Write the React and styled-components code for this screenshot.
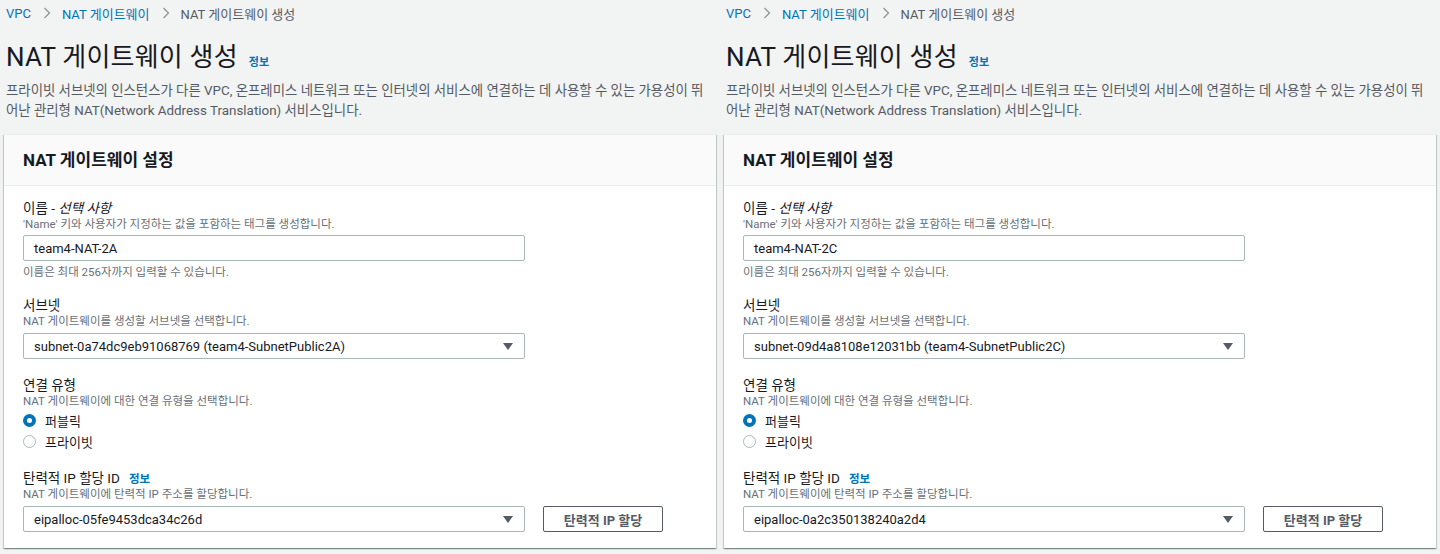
import React from "react";
import styled, { createGlobalStyle } from "styled-components";

const panels = [
  {
    name: "team4-NAT-2A",
    subnet: "subnet-0a74dc9eb91068769 (team4-SubnetPublic2A)",
    eip: "eipalloc-05fe9453dca34c26d"
  },
  {
    name: "team4-NAT-2C",
    subnet: "subnet-09d4a8108e12031bb (team4-SubnetPublic2C)",
    eip: "eipalloc-0a2c350138240a2d4"
  }
];

const ChevronIcon = () => (
  <Chevron viewBox="0 0 8 12" aria-hidden="true">
    <polyline points="1.5,1 6.5,6 1.5,11" fill="none" stroke="#879596" strokeWidth="1.2" />
  </Chevron>
);

const NatPanel = ({ data }) => (
  <Panel>
    <Breadcrumb>
      <Crumb link>VPC</Crumb>
      <ChevronIcon />
      <Crumb link>NAT 게이트웨이</Crumb>
      <ChevronIcon />
      <Crumb>NAT 게이트웨이 생성</Crumb>
    </Breadcrumb>

    <Title>
      NAT 게이트웨이 생성<InfoLink big>정보</InfoLink>
    </Title>
    <Description>
      <DescLine>
        프라이빗 서브넷의 인스턴스가 다른 VPC, 온프레미스 네트워크 또는 인터넷의 서비스에 연결하는 데 사용할 수 있는 가용성이 뛰
      </DescLine>
      <DescLine>어난 관리형 NAT(Network Address Translation) 서비스입니다.</DescLine>
    </Description>

    <Card>
      <CardHeader>NAT 게이트웨이 설정</CardHeader>
      <CardBody>
        <Field>
          <Label>
            이름 - <em>선택 사항</em>
          </Label>
          <Hint>'Name' 키와 사용자가 지정하는 값을 포함하는 태그를 생성합니다.</Hint>
          <Input>{data.name}</Input>
          <Hint after>이름은 최대 256자까지 입력할 수 있습니다.</Hint>
        </Field>

        <Field>
          <Label>서브넷</Label>
          <Hint>NAT 게이트웨이를 생성할 서브넷을 선택합니다.</Hint>
          <Select>
            {data.subnet}
            <Caret />
          </Select>
        </Field>

        <Field>
          <Label>연결 유형</Label>
          <Hint>NAT 게이트웨이에 대한 연결 유형을 선택합니다.</Hint>
          <RadioGroup>
            <RadioRow>
              <Radio checked />
              퍼블릭
            </RadioRow>
            <RadioRow>
              <Radio />
              프라이빗
            </RadioRow>
          </RadioGroup>
        </Field>

        <Field>
          <Label>
            탄력적 IP 할당 ID<InfoLink>정보</InfoLink>
          </Label>
          <Hint>NAT 게이트웨이에 탄력적 IP 주소를 할당합니다.</Hint>
          <ControlRow>
            <Select>
              {data.eip}
              <Caret />
            </Select>
            <Button>탄력적 IP 할당</Button>
          </ControlRow>
        </Field>
      </CardBody>
    </Card>
  </Panel>
);

export default function App() {
  return (
    <>
      <GlobalStyle />
      <Page>
        {panels.map((p, i) => (
          <NatPanel key={i} data={p} />
        ))}
      </Page>
    </>
  );
}

const GlobalStyle = createGlobalStyle`
  body {
    margin: 0;
    background: #f2f3f3;
    font-family: Roboto, "Noto Sans CJK KR", sans-serif;
    color: #16191f;
  }
`;

const Page = styled.div`
  display: flex;
  width: 1440px;
  height: 554px;
  overflow: hidden;
`;

const Panel = styled.div`
  width: 720px;
  flex-shrink: 0;
  padding-top: 5px;
  box-sizing: border-box;
`;

const Breadcrumb = styled.div`
  display: flex;
  align-items: center;
  height: 16px;
  padding-left: 6px;
  font-size: 13px;
  white-space: nowrap;
`;

const Crumb = styled.span`
  color: ${p => (p.link ? "#0073bb" : "#545b64")};
`;

const Chevron = styled.svg`
  width: 8px;
  height: 12px;
  margin: 0 11px 0 12px;
`;

const Title = styled.h1`
  display: flex;
  align-items: baseline;
  margin: 21px 0 0;
  padding-left: 6px;
  height: 30px;
  font-size: 26px;
  letter-spacing: 0.2px;
  line-height: 30px;
  font-weight: 400;
  color: #16191f;
  white-space: nowrap;
`;

const InfoLink = styled.span`
  color: #0073bb;
  font-weight: 700;
  letter-spacing: 0;
  font-size: ${p => (p.big ? "11px" : "11.5px")};
  margin-left: ${p => (p.big ? "11px" : "9px")};
`;

const Description = styled.div`
  margin-top: 9px;
  padding-left: 6px;
  font-size: 13.4px;
  color: #545b64;
`;

const DescLine = styled.div`
  height: 20px;
  line-height: 20px;
  white-space: nowrap;
`;

const Card = styled.div`
  margin: 13px 4px 0;
  background: #fff;
  border-top: 1px solid #eaeded;
  box-shadow: 0 1px 1px 0 rgba(0, 28, 36, 0.3), 1px 1px 1px 0 rgba(0, 28, 36, 0.15),
    -1px 1px 1px 0 rgba(0, 28, 36, 0.15);
`;

const CardHeader = styled.div`
  height: 51px;
  box-sizing: border-box;
  display: flex;
  align-items: center;
  padding: 0 0 4px 19px;
  background: #fafafa;
  border-bottom: 1px solid #eaeded;
  font-size: 17px;
  font-weight: 700;
  color: #16191f;
  white-space: nowrap;
`;

const CardBody = styled.div`
  padding: 11px 19px 16px;
`;

const Field = styled.div`
  & + & {
    margin-top: 15px;
  }
`;

const Label = styled.div`
  display: flex;
  align-items: baseline;
  height: 20px;
  box-sizing: border-box;
  padding-top: 2px;
  font-size: 13.5px;
  line-height: 18px;
  color: #16191f;
  white-space: pre;

  em {
    font-style: italic;
  }
`;

const Hint = styled.div`
  height: 14px;
  box-sizing: border-box;
  padding-top: 1px;
  font-size: 11.5px;
  line-height: 13px;
  color: #687078;
  white-space: nowrap;
  margin-top: ${p => (p.after ? "4px" : "0")};
`;

const controlBox = `
  height: 26px;
  box-sizing: border-box;
  border: 1px solid #aab7b8;
  border-radius: 2px;
  background: #fff;
  font-size: 13px;
  color: #16191f;
  display: flex;
  align-items: center;
  padding: 0 10px;
  white-space: nowrap;
`;

const Input = styled.div`
  ${controlBox}
  width: 502px;
  margin-top: 4px;
`;

const Select = styled.div`
  ${controlBox}
  width: 502px;
  margin-top: 5px;
  justify-content: space-between;
`;

const Caret = styled.span`
  width: 0;
  height: 0;
  border-left: 5px solid transparent;
  border-right: 5px solid transparent;
  border-top: 7px solid #545b64;
  margin-right: 1px;
`;

const ControlRow = styled.div`
  display: flex;
  align-items: flex-end;
  gap: 18px;
`;

const Button = styled.div`
  width: 120px;
  height: 26px;
  box-sizing: border-box;
  border: 1px solid #545b64;
  border-radius: 2px;
  background: #fff;
  color: #545b64;
  font-weight: 700;
  font-size: 13px;
  display: flex;
  align-items: center;
  justify-content: center;
  white-space: nowrap;
`;

const RadioGroup = styled.div`
  margin-top: 2px;
`;

const RadioRow = styled.div`
  display: flex;
  align-items: center;
  height: 21px;
  font-size: 13px;
  color: #16191f;
`;

const Radio = styled.span`
  width: 13px;
  height: 13px;
  box-sizing: border-box;
  border-radius: 50%;
  margin: 0 9px 0 0;
  border: ${p => (p.checked ? "4px solid #0073bb" : "1px solid #aab7b8")};
  background: #fff;
`;
